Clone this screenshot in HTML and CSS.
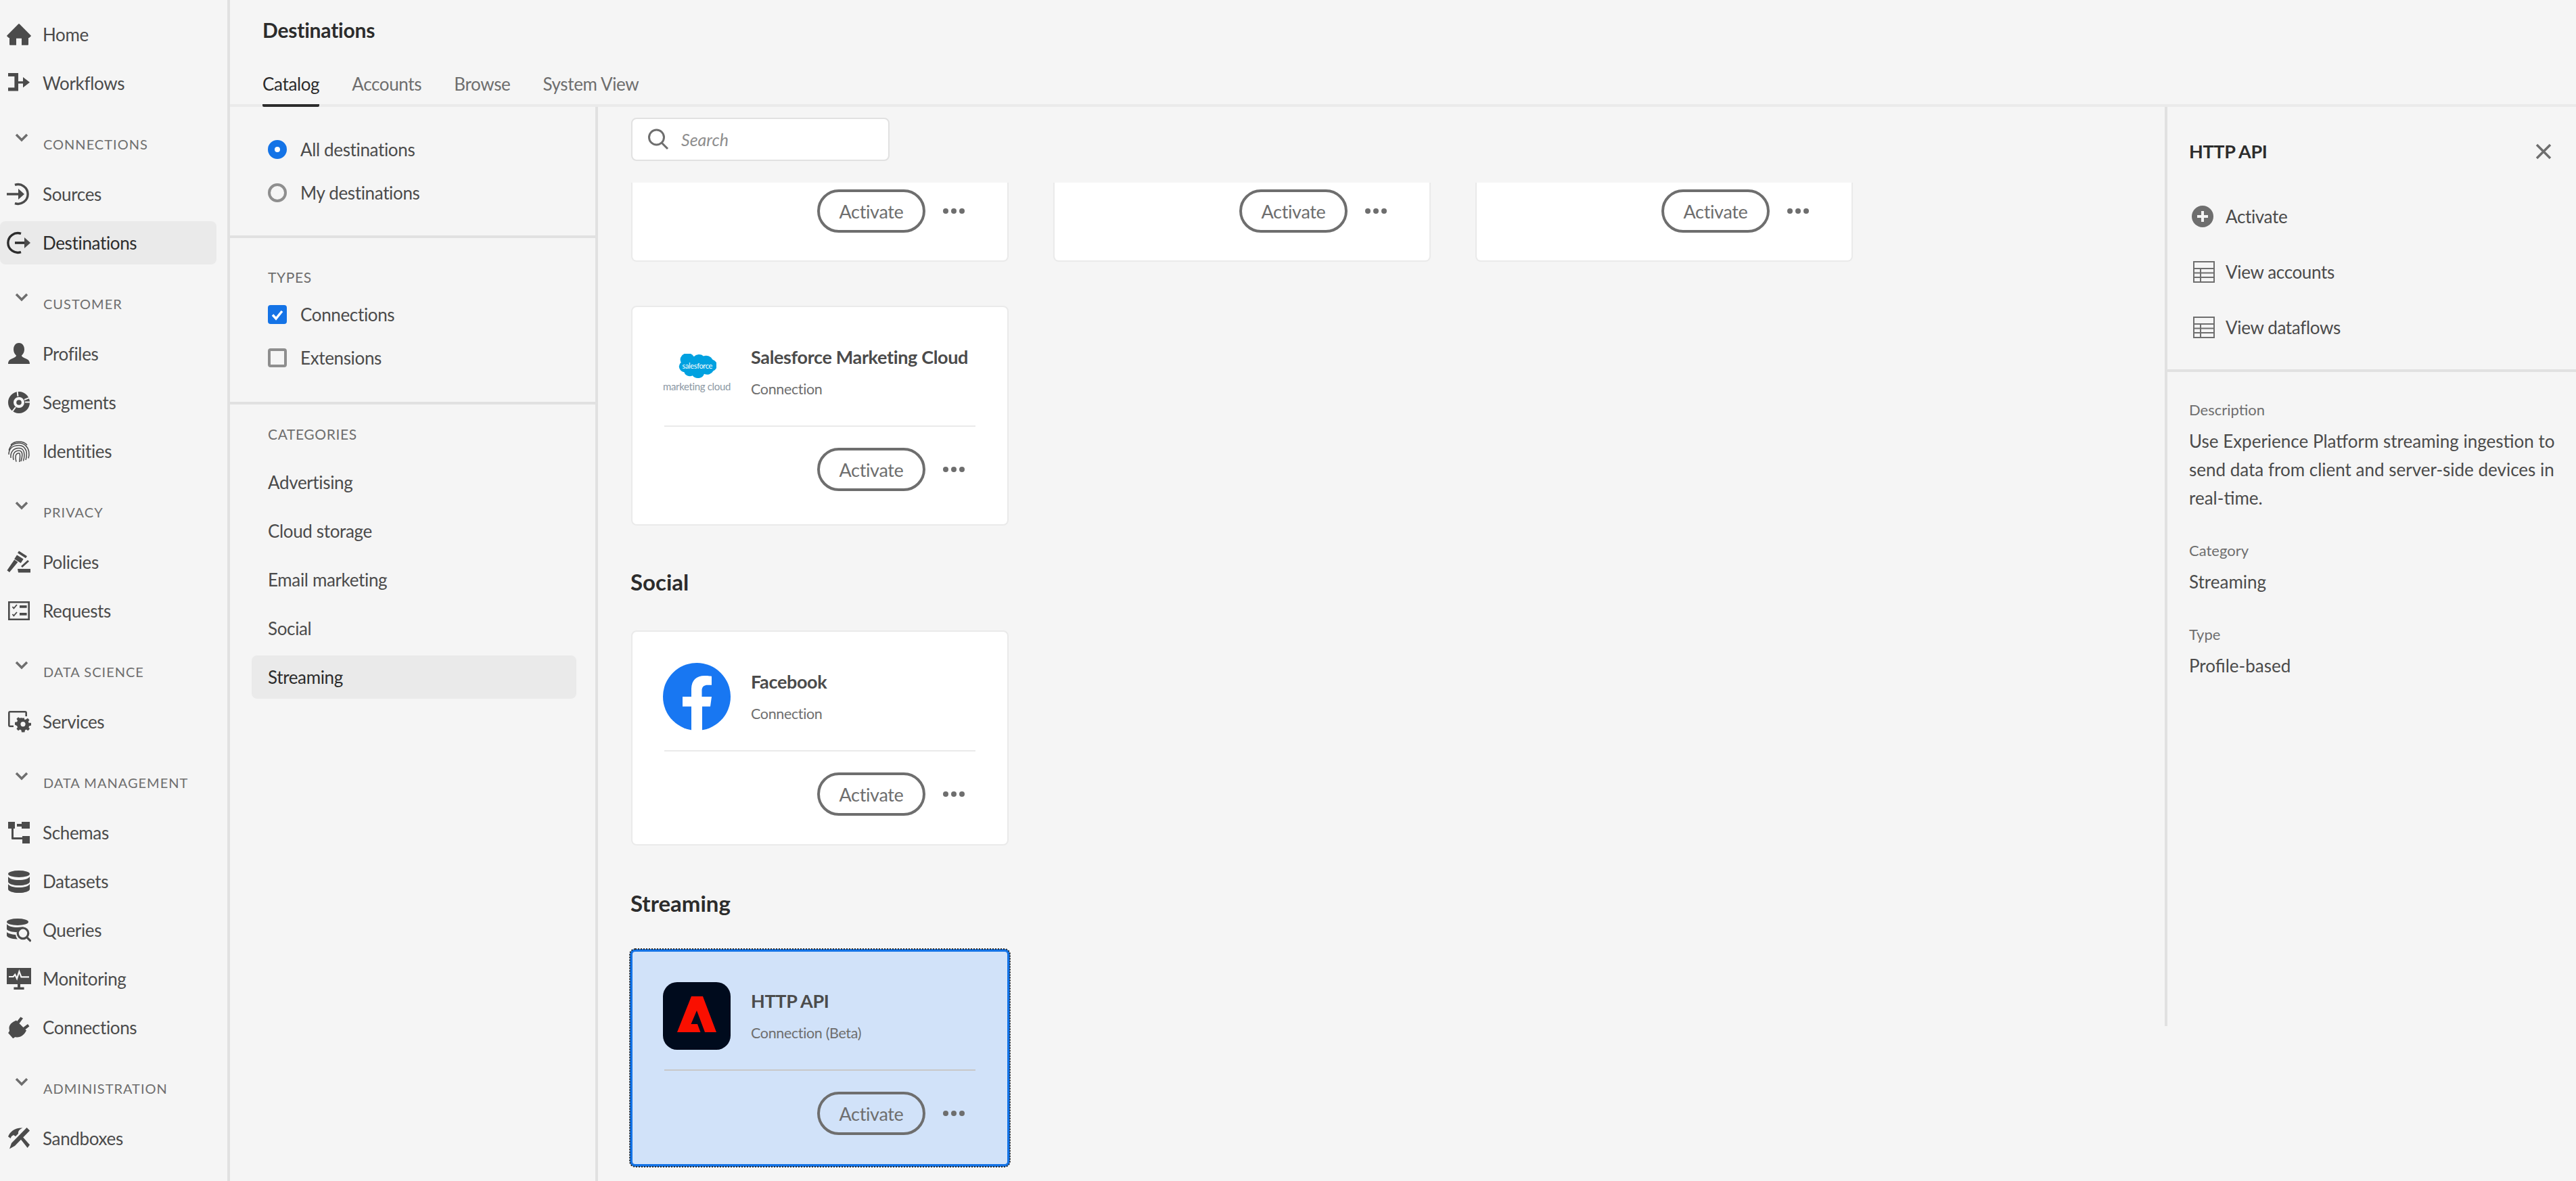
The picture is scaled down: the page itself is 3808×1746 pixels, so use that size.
FILE: index.html
```html
<!DOCTYPE html>
<html lang="en">
<head>
    <meta charset="UTF-8">
    <title>Destinations</title>
    <link rel="stylesheet" href="styles.css">
</head>
<body>
    <nav class="sidebar">
        <a class="nav-item"><svg class="nav-icon" viewBox="0 0 18 18"><path d="M17.700 9.600 9.400 1.300a.5.500 0 0 0-.8 0L.3 9.600a.5.500 0 0 0 0 .8l.9.9c.1.1.3.2.5.2H2v4.900a.5.500 0 0 0 .5.500H7v-5h4v5h4.500a.5.500 0 0 0 .5-.5v-4.900h.3c.2 0 .4-.1.500-.2l.9-.9a.5.500 0 0 0 0-.8Z"/></svg>Home</a>
        <a class="nav-item"><svg class="nav-icon" viewBox="0 0 18 18"><path d="M1 1.500h7.500v6.100H12V4.500l5 3.900-5 3.900V9.300H8.500v5.400H1v-2.500h4.700V4H1z"/></svg>Workflows</a>

        <div class="nav-group"><svg class="chevron" viewBox="0 0 20 13"><path d="M2 2l8 8 8-8"/></svg><span>CONNECTIONS</span></div>
        <a class="nav-item"><svg class="nav-icon stroke" viewBox="0 0 18 18"><path d="M6 2.200A7.200 7.200 0 1 1 6 15.800M0 9h10"/><path class="solid" d="M8.500 5 13 9l-4.500 4z"/></svg>Sources</a>
        <a class="nav-item active"><svg class="nav-icon stroke" viewBox="0 0 18 18"><path d="M10.500 2.200a7.200 7.200 0 1 0 0 13.600M6 9h8"/><path class="solid" d="M13 5l4.500 4-4.500 4z"/></svg>Destinations</a>

        <div class="nav-group"><svg class="chevron" viewBox="0 0 20 13"><path d="M2 2l8 8 8-8"/></svg><span>CUSTOMER</span></div>
        <a class="nav-item"><svg class="nav-icon" viewBox="0 0 18 18"><path d="M17 16.500H1c0-2.600 1.500-3.500 4-4.400 1.300-.5 2-1 2-1.800-1.200-1-2-2.600-2-4.500C5 3 6.500 1 9 1s4 2 4 4.800c0 1.900-.8 3.500-2 4.500 0 .8.700 1.300 2 1.800 2.500.9 4 1.800 4 4.400Z"/></svg>Profiles</a>
        <a class="nav-item"><svg class="nav-icon" viewBox="0 0 18 18"><circle class="ring" cx="9" cy="9" r="6"/><circle cx="9" cy="9" r="1.900"/><path class="gap" d="M8.200 4.500 7.800.5M13 7l4.500-1.800M13.500 8.800h4.500M6.500 12.500l-2.800 3.700"/></svg>Segments</a>
        <a class="nav-item"><svg class="nav-icon thin" viewBox="0 0 18 18"><path d="M3 4.500C5.500 1.200 12.500 1.200 15 4.500M1.600 8.500C2.500 4.700 5.500 3 9 3c3.700 0 6.500 2.400 7.300 6.200.3 1.800.2 3.600-.3 5M1.500 11.500C1.500 7 4.500 4.800 9 4.800c3.700 0 5.700 3 5.700 6.200 0 1.500-.2 3-.7 4.500M3 14C2.500 9.500 5 6.800 9 6.800c2.700 0 4 2.200 4 5 0 1.500-.3 3-.8 4.500M5 15.500C4.200 12 5 8.600 9 8.600c1.800 0 2.400 1.600 2.400 3.200 0 1.600-.4 3-.9 4.700M7 16.800C6.200 14 6 10.500 9 10.500c1 0 .9 2.500.4 6.500"/></svg>Identities</a>

        <div class="nav-group"><svg class="chevron" viewBox="0 0 20 13"><path d="M2 2l8 8 8-8"/></svg><span>PRIVACY</span></div>
        <a class="nav-item"><svg class="nav-icon" viewBox="0 0 18 18"><path d="M9 .8l6 3.800-1 1.500-6-3.800zM7.500 3.800l4.800 3-1.900 3-4.800-3zM5.600 7.300l2.600 1.700-6.200 7.500-1.800-1.400zM15.500 7.500l1 1-5 4.500-1-1zM8 14h9.500v2.700H8.500z"/></svg>Policies</a>
        <a class="nav-item"><svg class="nav-icon" viewBox="0 0 18 18"><path d="M1 2h16v14H1zm1.300 1.300v11.400h13.400V3.300z" fill-rule="evenodd"/><path d="M9.500 5h5.300v1.900H9.500zM9.500 10.500h5.300v1.900H9.500z"/><path class="line" d="M4.200 6l1 1.200L7.500 4.500M4.200 11.500l1 1.200 2.300-2.700"/></svg>Requests</a>

        <div class="nav-group"><svg class="chevron" viewBox="0 0 20 13"><path d="M2 2l8 8 8-8"/></svg><span>DATA SCIENCE</span></div>
        <a class="nav-item"><svg class="nav-icon" viewBox="0 0 18 18"><path d="M2.500 1h11A1.500 1.500 0 0 1 15 2.500V5h-1.300V2.300H2.300v9.400H5V13H2.500A1.500 1.500 0 0 1 1 11.500v-9A1.500 1.500 0 0 1 2.500 1Z"/><path d="M11 6.200h1.900l.3 1.400 1-.4 1.300-.8 1.200 1.300-.8 1.200.4 1H18v1.900l-1.400.3-.4 1 .8 1.200-1.300 1.300-1.200-.8-1 .4-.3 1.500H11l-.3-1.500-1-.4-1.200.8-1.300-1.300.8-1.200-.4-1L6 11.300V9.400l1.600-.3.400-1-.8-1.200 1.300-1.300 1.200.8 1-.4ZM12 9a1.800 1.800 0 1 0 0 3.600A1.800 1.800 0 0 0 12 9Z" fill-rule="evenodd"/></svg>Services</a>

        <div class="nav-group"><svg class="chevron" viewBox="0 0 20 13"><path d="M2 2l8 8 8-8"/></svg><span>DATA MANAGEMENT</span></div>
        <a class="nav-item"><svg class="nav-icon" viewBox="0 0 18 18"><path d="M1 1h5v5H5v6.500h6.500V11.500H17V17h-5.500v-3H4a.5.500 0 0 1-.5-.5V6H1zM7.500 2.500H11V1h6v5h-6V4.500H7.500z"/></svg>Schemas</a>
        <a class="nav-item"><svg class="nav-icon" viewBox="0 0 18 18"><ellipse cx="9" cy="3.500" rx="8" ry="2.500"/><path d="M1 5.500C1.800 7 5 8 9 8s7.200-1 8-2.500v3.700C17 10.700 13.400 12 9 12s-8-1.300-8-2.800zM1 11c.8 1.500 4 2.500 8 2.500s7.200-1 8-2.500v3.700c0 1.500-3.600 2.800-8 2.800s-8-1.300-8-2.800z"/></svg>Datasets</a>
        <a class="nav-item"><svg class="nav-icon" viewBox="0 0 18 18"><ellipse cx="8" cy="3" rx="8" ry="2.500"/><path d="M0 4.500C.8 6 4 7 8 7c2 0 3.700-.2 5-.7l-1.200.6c-2 .6-3.700 2-4.200 3.700C4 10.500 1 9.700 0 8.500zM0 10.500c1 1 3.500 1.800 6.600 2 .1 1.300.6 2.300 1.400 3.200-4.400 0-8-1.200-8-2.700z"/><path class="line wide" d="M12 7.500a3.900 3.900 0 1 0 0 7.800 3.900 3.900 0 0 0 0-7.800zM14.800 14.300l3 3"/></svg>Queries</a>
        <a class="nav-item"><svg class="nav-icon" viewBox="0 0 18 18"><path d="M0 1h18v12H10v2.200h2.800V17H5.200v-1.800H8V13H0z"/><path class="line light" d="M1.500 7.500h3.300l1.300-1.600 1.400 3 1.700-5.200 1.500 4h5.800"/></svg>Monitoring</a>
        <a class="nav-item"><svg class="nav-icon" viewBox="0 0 18 18"><path d="M7 3.800l7.500 7.500-.9 1.500c-1.800 2.700-4.400 3.800-6.600 3.400-.8-.1-1.100 0-1.900.7L4.500 17 1 13l.4-.4c.6-.7.700-1.200.5-2C1.300 8.400 2.500 6 5 4.700zM10.200 1.200l1.800 1.100-2.900 3.900-1.700-1.500zM15.500 6.500l1.200 1.600-3.700 3-1.500-1.600z"/></svg>Connections</a>

        <div class="nav-group"><svg class="chevron" viewBox="0 0 20 13"><path d="M2 2l8 8 8-8"/></svg><span>ADMINISTRATION</span></div>
        <a class="nav-item"><svg class="nav-icon" viewBox="0 0 18 18"><path d="M1 7.600C2.500 4 6 1 11.700 1.300 9 2.500 8.300 4 8.500 5.500L6.500 7.500 5 6.500 3.500 7.500 2.800 9zM9.600 8.800l1.600-1.500 5.800 6.500-1.700 2.200zM14.800 1 17 3.200 6 14.500l-4 2.300 1.500-4.300z"/></svg>Sandboxes</a>
    </nav>

    <div class="page">
        <header class="page-head">
            <h1 class="page-title">Destinations</h1>
            <div class="tabs">
                <a class="tab selected">Catalog</a>
                <a class="tab">Accounts</a>
                <a class="tab">Browse</a>
                <a class="tab">System View</a>
            </div>
        </header>

        <div class="columns">
            <aside class="filters">
                <section class="filter-block radios">
                    <label class="check"><span class="radio on"></span>All destinations</label>
                    <label class="check"><span class="radio"></span>My destinations</label>
                </section>
                <section class="filter-block types">
                    <h4 class="filter-title">TYPES</h4>
                    <label class="check"><span class="box on"><svg viewBox="0 0 28 28"><path d="M7 14.500l5 5.500 9-11"/></svg></span>Connections</label>
                    <label class="check"><span class="box"></span>Extensions</label>
                </section>
                <section class="filter-block categories">
                    <h4 class="filter-title">CATEGORIES</h4>
                    <a class="category">Advertising</a>
                    <a class="category">Cloud storage</a>
                    <a class="category">Email marketing</a>
                    <a class="category">Social</a>
                    <a class="category current">Streaming</a>
                </section>
            </aside>

            <main class="catalog">
                <div class="search">
                    <svg class="search-icon" viewBox="0 0 32 32"><path d="M13.500 2a11 11 0 1 0 0 22 11 11 0 0 0 0-22zM21.500 21.500l8.500 8.500"/></svg>
                    <span>Search</span>
                </div>

                <div class="cut-row">
                    <div class="card cut"><div class="card-actions"><button class="activate">Activate</button><span class="dots"><i></i><i></i><i></i></span></div></div>
                    <div class="card cut"><div class="card-actions"><button class="activate">Activate</button><span class="dots"><i></i><i></i><i></i></span></div></div>
                    <div class="card cut"><div class="card-actions"><button class="activate">Activate</button><span class="dots"><i></i><i></i><i></i></span></div></div>
                </div>

                <div class="card sf">
                    <div class="card-top">
                        <div class="logo sf-logo">
                            <div class="cloud"><svg viewBox="0 0 60 46" preserveAspectRatio="none"><path d="M25 5a10 10 0 0 1 15-1 11 11 0 0 1 14 6 11 11 0 0 1 1 20 10 10 0 0 1-14 5 10 10 0 0 1-18 3 9 9 0 0 1-13-6 10 10 0 0 1-5-17 10 10 0 0 1 20-10Z"/></svg><span>salesforce</span></div>
                            <div class="sf-caption">marketing cloud</div>
                        </div>
                        <div class="card-text">
                            <div class="card-name">Salesforce Marketing Cloud</div>
                            <div class="card-type">Connection</div>
                        </div>
                    </div>
                    <div class="card-actions"><button class="activate">Activate</button><span class="dots"><i></i><i></i><i></i></span></div>
                </div>

                <h2 class="section-title social">Social</h2>
                <div class="card fb">
                    <div class="card-top">
                        <svg class="logo" viewBox="0 0 100 100"><circle cx="50" cy="50" r="50" fill="#1877f2"/><path fill="#fff" d="M42 100V64.500H29V50h13V39c0-13 7.500-20 19.500-20 5.500 0 10.500.8 10.500.8v13h-6c-6.500 0-8.500 4-8.500 8V50h14.500L70 64.500H58V100a50 50 0 0 1-16 0Z"/></svg>
                        <div class="card-text">
                            <div class="card-name">Facebook</div>
                            <div class="card-type">Connection</div>
                        </div>
                    </div>
                    <div class="card-actions"><button class="activate">Activate</button><span class="dots"><i></i><i></i><i></i></span></div>
                </div>

                <h2 class="section-title streaming">Streaming</h2>
                <div class="card selected-card">
                    <div class="card-top">
                        <svg class="logo" viewBox="0 0 100 100"><rect width="100" height="100" rx="21" fill="#000b1d"/><path fill="#fa0f00" d="M42 21H59L79 74H62L50 42 41.500 62H51L55.500 74H21Z"/></svg>
                        <div class="card-text">
                            <div class="card-name">HTTP API</div>
                            <div class="card-type">Connection (Beta)</div>
                        </div>
                    </div>
                    <div class="card-actions"><button class="activate">Activate</button><span class="dots"><i></i><i></i><i></i></span></div>
                </div>
            </main>

            <aside class="details">
                <div class="details-top">
                    <div class="details-head">
                        <h3 class="details-title">HTTP API</h3>
                        <svg class="close" viewBox="0 0 24 24"><path d="M2 2l20 20M22 2L2 22"/></svg>
                    </div>
                    <a class="action"><svg viewBox="0 0 32 32"><circle cx="16" cy="16" r="16" fill="#6e6e6e"/><path fill="#f5f5f5" d="M14 8h4v6h6v4h-6v6h-4v-6H8v-4h6z"/></svg>Activate</a>
                    <a class="action"><svg class="table" viewBox="0 0 32 32"><path d="M1 1h30v30H1zM1 11h30M1 17.500h30M1 24h30M11 11v20"/></svg>View accounts</a>
                    <a class="action"><svg class="table" viewBox="0 0 32 32"><path d="M1 1h30v30H1zM1 11h30M1 17.500h30M1 24h30M11 11v20"/></svg>View dataflows</a>
                </div>
                <dl class="facts">
                    <dt>Description</dt>
                    <dd>Use Experience Platform streaming ingestion to send data from client and server-side devices in real-time.</dd>
                    <dt>Category</dt>
                    <dd>Streaming</dd>
                    <dt>Type</dt>
                    <dd>Profile-based</dd>
                </dl>
            </aside>
        </div>
    </div>
</body>
</html>
```

FILE: styles.css
```css
* {
    box-sizing: border-box;
}

html,
body {
    height: 100%;
}

body {
    margin: 0;
    display: flex;
    height: 1746px;
    overflow: hidden;
    background-color: #f5f5f5;
    color: #4b4b4b;
    font-family: Lato, "Noto Sans", sans-serif;
    font-size: 26px;
    letter-spacing: -.35px;
}

/* left nav */
.sidebar {
    width: 340px;
    flex: none;
    padding-top: 19px;
    border-right: 4px solid #e1e1e1;
}

.nav-item {
    display: flex;
    align-items: center;
    width: 320px;
    height: 64px;
    margin-bottom: 8px;
    border-radius: 8px;
    padding-left: 10px;
}

.nav-item.active {
    background-color: #eaeaea;
    color: #2c2c2c;
}

.nav-icon {
    width: 36px;
    height: 36px;
    margin-right: 17px;
    flex: none;
    fill: #4b4b4b;
}

.nav-icon.stroke,
.nav-icon.thin {
    fill: none;
    stroke: #4b4b4b;
    stroke-width: 1.700;
}

.nav-icon.thin {
    stroke-width: .75;
}

.active .nav-icon.stroke {
    stroke: #2c2c2c;
}

.nav-icon .solid {
    fill: #4b4b4b;
    stroke: none;
}

.nav-icon .ring {
    fill: none;
    stroke: #4b4b4b;
    stroke-width: 4;
}

.nav-icon .gap {
    fill: none;
    stroke: #f5f5f5;
    stroke-width: 1;
}

.nav-icon .line {
    fill: none;
    stroke: #4b4b4b;
    stroke-width: .9;
}

.nav-icon .line.wide {
    stroke-width: 1.600;
}

.nav-icon .line.light {
    stroke: #f5f5f5;
    stroke-width: 1.100;
}

.nav-group {
    position: relative;
    height: 84px;
    margin-bottom: 8px;
    padding: 35px 0 0 64px;
    color: #6e6e6e;
    font-size: 20px;
    line-height: 30px;
    letter-spacing: 1px;
}

.chevron {
    position: absolute;
    left: 22px;
    top: 34px;
    width: 20px;
    height: 13px;
    fill: none;
    stroke: #6e6e6e;
    stroke-width: 3.500;
}

/* header + tabs */
.page {
    flex: 1;
    display: flex;
    flex-direction: column;
    min-width: 0;
}

.page-head {
    height: 158px;
    border-bottom: 4px solid #eaeaea;
}

.page-title {
    margin: 0;
    padding: 23px 0 0 48px;
    color: #2c2c2c;
    font-size: 30px;
    line-height: 42px;
    font-weight: 700;
    letter-spacing: -.2px;
}

.tabs {
    display: flex;
    gap: 48px;
    padding: 23px 0 0 48px;
}

.tab {
    height: 70px;
    line-height: 72px;
    color: #6e6e6e;
}

.tab.selected {
    color: #2c2c2c;
    border-bottom: 4px solid #2c2c2c;
    border-radius: 0 0 2px 2px;
}

.columns {
    flex: 1;
    display: flex;
    min-height: 0;
}

/* filters column */
.filters {
    width: 544px;
    flex: none;
    border-right: 4px solid #e1e1e1;
}

.filter-block {
    padding: 0 28px 0 56px;
    border-bottom: 4px solid #e1e1e1;
}

.radios {
    height: 194px;
    padding-top: 31px;
}

.types {
    height: 246px;
    padding-top: 41px;
}

.categories {
    padding: 27px 28px 0 32px;
    border-bottom: 0;
}

.filter-title {
    margin: 0 0 6px;
    height: 34px;
    color: #6e6e6e;
    font-size: 21px;
    line-height: 34px;
    font-weight: 400;
    letter-spacing: .6px;
}

.categories .filter-title {
    margin: 0 0 22px 24px;
}

.check {
    display: flex;
    align-items: center;
    height: 64px;
    line-height: 66px;
}

.radio,
.box {
    width: 28px;
    height: 28px;
    margin-right: 20px;
    flex: none;
    border: 4px solid #8e8e8e;
    border-radius: 50%;
}

.radio.on {
    border: 10px solid #1473e6;
    background-color: #fff;
}

.box {
    border-radius: 4px;
}

.box.on {
    border: 0;
    background-color: #1473e6;
}

.box svg {
    display: block;
    fill: none;
    stroke: #fff;
    stroke-width: 3.500;
}

.category {
    display: block;
    height: 64px;
    margin-bottom: 8px;
    padding-left: 24px;
    border-radius: 8px;
    line-height: 64px;
}

.category.current {
    background-color: #eaeaea;
    color: #2c2c2c;
}

/* catalog column */
.catalog {
    flex: 1;
    min-width: 0;
    padding: 16px 0 0 49px;
    overflow: hidden;
}

.search {
    display: flex;
    align-items: center;
    width: 382px;
    height: 64px;
    padding-left: 22px;
    border: 2px solid #e1e1e1;
    border-radius: 8px;
    background-color: #fff;
    color: #8e8e8e;
    font-style: italic;
    font-size: 25px;
    letter-spacing: 0;
}

.search-icon {
    width: 32px;
    height: 32px;
    margin-right: 18px;
    fill: none;
    stroke: #6e6e6e;
    stroke-width: 3;
}

.cut-row {
    display: flex;
    gap: 66px;
    height: 117px;
    margin-top: 32px;
    overflow: hidden;
}

.card {
    width: 558px;
    border: 2px solid #eaeaea;
    border-radius: 8px;
    background-color: #fff;
}

.card.cut {
    height: 117px;
    border-top: 0;
    border-radius: 0 0 8px 8px;
    padding-top: 10px;
}

.card-top {
    display: flex;
    align-items: center;
    height: 177px;
    margin: 0 47px;
    padding-top: 16px;
    border-bottom: 2px solid #eaeaea;
}

.logo {
    width: 100px;
    height: 100px;
    margin-left: -2px;
    margin-right: 30px;
    flex: none;
}

.card-name {
    color: #4b4b4b;
    font-weight: 700;
    font-size: 27px;
    line-height: 36px;
    white-space: nowrap;
}

.card-type {
    margin-top: 14px;
    color: #6e6e6e;
    font-size: 21.500px;
    line-height: 30px;
}

.card-actions {
    display: flex;
    align-items: center;
    padding-left: 273px;
}

.card-top + .card-actions {
    padding-top: 31px;
}

.activate {
    width: 160px;
    height: 64px;
    padding: 0;
    border: 4px solid #6e6e6e;
    border-radius: 32px;
    background: transparent;
    color: #6e6e6e;
    font-family: inherit;
    font-size: 27px;
    letter-spacing: -.35px;
}

.dots {
    display: flex;
    gap: 4px;
    margin-left: 26px;
}

.dots i {
    width: 8px;
    height: 8px;
    border-radius: 50%;
    background-color: #6e6e6e;
}

.card.sf {
    height: 325px;
    margin-top: 65px;
}

.sf-logo {
    padding-top: 23px;
    text-align: center;
}

.cloud {
    position: relative;
    width: 57px;
    height: 39px;
    margin: 0 auto;
}

.cloud svg {
    display: block;
    width: 57px;
    height: 39px;
    fill: #00a1e0;
}

.cloud span {
    position: absolute;
    left: 7px;
    top: 11px;
    color: #fff;
    font-size: 11px;
    line-height: 14px;
}

.sf-caption {
    margin-top: -1px;
    color: #8c98a4;
    font-size: 15px;
    line-height: 20px;
    white-space: nowrap;
}

.section-title {
    margin: 0 0 0 -1px;
    color: #2c2c2c;
    font-size: 33px;
    line-height: 44px;
    font-weight: 700;
    letter-spacing: 0;
}

.section-title.social {
    margin-top: 61px;
}

.section-title.streaming {
    margin-top: 63px;
}

.card.fb {
    height: 318px;
    margin-top: 50px;
}

.selected-card {
    height: 322px;
    margin-top: 46px;
    border: 4px solid #1473e6;
    outline: 2px dotted #2c2c2c;
    outline-offset: -1px;
    background-color: #d1e2f9;
    width: 562px;
    margin-left: -2px;
}

.selected-card .card-top {
    border-bottom-color: #c8c8c8;
    height: 176px;
    margin: 0 47px;
}

/* right details panel */
.details {
    width: 608px;
    flex: none;
    height: 1359px;
    border-left: 4px solid #e1e1e1;
}

.details-top {
    height: 392px;
    padding: 0 32px;
    border-bottom: 4px solid #e1e1e1;
}

.details-head {
    display: flex;
    align-items: center;
    justify-content: space-between;
    height: 121px;
    padding: 10px 4px 0 0;
}

.details-title {
    margin: 0;
    color: #2c2c2c;
    font-size: 27px;
    font-weight: 700;
}

.close {
    width: 24px;
    height: 24px;
    fill: none;
    stroke: #6e6e6e;
    stroke-width: 3.500;
}

.action {
    display: flex;
    align-items: center;
    height: 82px;
}

.action svg {
    width: 32px;
    height: 32px;
    margin: 0 18px 0 4px;
    flex: none;
}

.action svg.table {
    margin-left: 6px;
    margin-right: 16px;
    fill: none;
    stroke: #6e6e6e;
    stroke-width: 2;
}

.facts {
    margin: 0;
    padding: 39px 28px 0 32px;
    letter-spacing: 0;
}

.facts dt {
    color: #6e6e6e;
    font-size: 22px;
    line-height: 34px;
    margin-bottom: 8px;
}

.facts dd {
    margin: 0 0 40px;
    font-size: 26px;
    line-height: 42px;
}
```
